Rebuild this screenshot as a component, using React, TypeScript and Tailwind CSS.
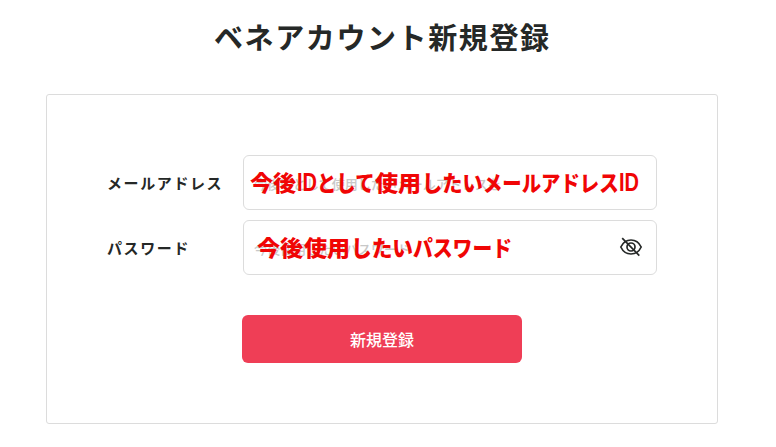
import React from 'react';

interface Segment {
  text: string;
  box: string;
  glyphs: string;
}

interface Field {
  id: string;
  label: string;
  placeholder: string;
  note: Segment[];
  noteClass: string;
  secret?: boolean;
}

const FIELDS: Field[] = [
  {
    id: 'mail',
    label: 'メールアドレス',
    placeholder: '今後IDとして使用したいメールアドレスを',
    note: [
      { text: '今後', box: 'w-[47px]', glyphs: 'scale-x-[1.05]' },
      { text: 'ID', box: 'w-[20px]', glyphs: "font-['Liberation_Sans'] text-[25px] leading-[30px] scale-x-[0.8]" },
      { text: 'として', box: 'w-[58px]', glyphs: 'scale-x-[0.88]' },
      { text: '使用', box: 'w-[47px]', glyphs: 'scale-x-[1.05]' },
      { text: 'したい', box: 'w-[61px]', glyphs: 'scale-x-[0.92]' },
      { text: 'メールアドレス', box: 'w-[136px]', glyphs: 'scale-x-[0.88]' },
      { text: 'ID', box: 'w-[20px]', glyphs: "font-['Liberation_Sans'] text-[25px] leading-[30px] scale-x-[0.8]" }
    ],
    noteClass: 'left-[6px]'
  },
  {
    id: 'password',
    label: 'パスワード',
    placeholder: '今後使用したいパスワード',
    note: [
      { text: '今後', box: 'w-[47px]', glyphs: 'scale-x-[1.05]' },
      { text: '使用', box: 'w-[47px]', glyphs: 'scale-x-[1.05]' },
      { text: 'したい', box: 'w-[62px]', glyphs: 'scale-x-[0.94]' },
      { text: 'パスワード', box: 'w-[99px]', glyphs: 'scale-x-[0.9]' }
    ],
    noteClass: 'left-[13px]',
    secret: true
  }
];

const EyeOffIcon: React.FC = () => (
  <svg className="absolute left-[375px] top-[14px] w-6 h-6" viewBox="0 0 24 24" fill="none" stroke="#252827" strokeWidth="1.7">
    <path d="M1.8 12C4 7.4 7.6 5 12 5s8 2.4 10.200 7C20 16.6 16.4 19 12 19S4 16.600 1.800 12Z" />
    <circle cx="12" cy="12" r="4" />
    <path d="M3.2 3.2 20.3 20.600" />
  </svg>
);

const NoteText: React.FC<{ segments: Segment[]; className: string }> = ({ segments, className }) => (
  <span className={`absolute top-[10px] flex h-[30px] text-[22px] leading-[30px] font-black text-[#f00505] whitespace-nowrap ${className}`}>
    {segments.map((seg, i) => (
      <span key={i} className={seg.box}>
        <span className={`inline-block origin-left ${seg.glyphs}`}>{seg.text}</span>
      </span>
    ))}
  </span>
);

const App: React.FC = () => {
  return (
    <div className="w-[776px] h-[447px] overflow-hidden bg-white text-[#252827] font-['Noto_Sans_CJK_JP',sans-serif]">
      <h1 className="pt-[15px] pl-[214px] h-[94px] text-[29px] leading-[42px] tracking-[1.6px] font-bold whitespace-nowrap">
        ベネアカウント新規登録
      </h1>

      <form className="ml-[46px] w-[672px] h-[330px] pt-[60px] pl-[60px] border border-[#dcdcdc] rounded-[3px]">
        <div className="flex flex-col gap-[10px]">
          {FIELDS.map(field => (
            <div key={field.id} className="flex items-center h-[55px]">
              <label className="w-[136px] pt-px text-[15px] leading-[22px] tracking-[1.6px] font-bold whitespace-nowrap">
                {field.label}
              </label>
              <div className="relative w-[414px] h-[55px] pl-[10px] flex items-center border border-[#dcdcdc] rounded-[6px]">
                <span className="pt-[3px] text-[13px] font-medium text-[#c8c8c8] whitespace-nowrap">{field.placeholder}</span>
                <NoteText segments={field.note} className={field.noteClass} />
                {field.secret && <EyeOffIcon />}
              </div>
            </div>
          ))}
        </div>

        <button type="button" className="mt-[40px] ml-[135px] w-[280px] h-[48px] rounded-[6px] bg-[#ef3e56] text-white text-[16px] font-medium">
          新規登録
        </button>
      </form>
    </div>
  );
};

export default App;
